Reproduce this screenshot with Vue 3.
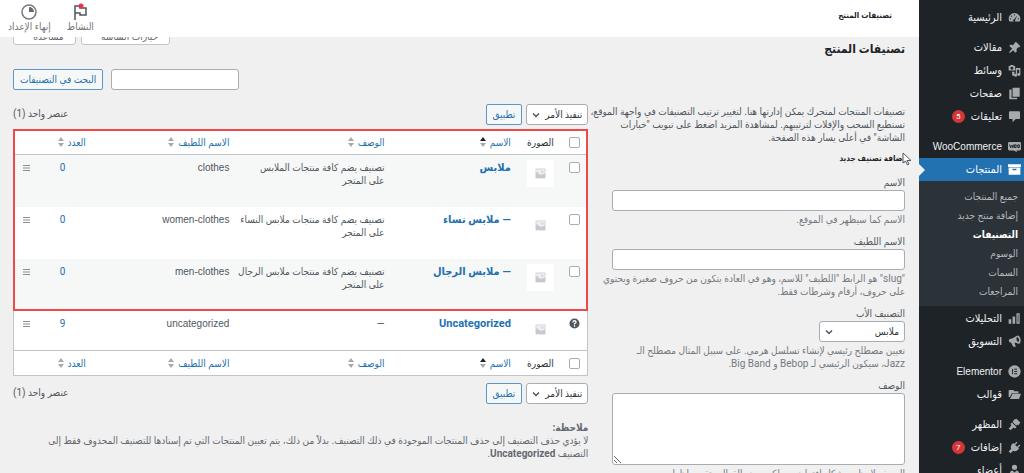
<script setup>
const menuTop = [
  { label: 'الرئيسية', icon: 'dash' },
  { label: 'مقالات', icon: 'pin', gap: true },
  { label: 'وسائط', icon: 'media' },
  { label: 'صفحات', icon: 'pages' },
  { label: 'تعليقات', icon: 'comment', badge: 5 },
  { label: 'WooCommerce', icon: 'woo', gap: true, latin: true },
]
const submenu = ['جميع المنتجات', 'إضافة منتج جديد', 'التصنيفات', 'الوسوم', 'السمات', 'المراجعات']
const menuBottom = [
  { label: 'التحليلات', icon: 'bars' },
  { label: 'التسويق', icon: 'horn' },
  { label: 'Elementor', icon: 'elementor', gap: true, latin: true },
  { label: 'قوالب', icon: 'folder' },
  { label: 'المظهر', icon: 'brush', gap: true },
  { label: 'إضافات', icon: 'plug', badge: 7 },
  { label: 'أعضاء', icon: 'user' },
]
const icons = {
  dash: 'M10 3a9 9 0 0 0-8 13h16A9 9 0 0 0 10 3zm0 2a1 1 0 1 1 0 2 1 1 0 0 1 0-2zM5.500 7a1 1 0 1 1 0 2 1 1 0 0 1 0-2zm9 0-3.500 7a1.600 1.600 0 1 1-2-1zM4 11a1 1 0 1 1 0 2 1 1 0 0 1 0-2zm12 0a1 1 0 1 1 0 2 1 1 0 0 1 0-2z',
  pin: 'M10 3.500 12 1l7 7-2 2-1.400-.4-2.600 3 .5 3.600-2 2-3.800-3.800-5 4.500L2 17l4.300-5.300L2 7.500l2-2 3.500 1z',
  media: 'M1 3h2l1-1.500h4L9 3h2v7H1zm5 1.200a2.200 2.200 0 1 0 0 4.500 2.200 2.200 0 0 0 0-4.500zM12 6h7v10a2.300 2.300 0 1 1-1.800-2.200V9H14v8.500a2.300 2.300 0 1 1-2-2.300zM6 12h4v4a2 2 0 1 1-1.500-2H6z',
  pages: 'M7 1h11v14H7zM2 4h3.500v12.500H14V19H2z',
  comment: 'M3 2h14q1.500 0 1.500 1.500v9Q18.500 14 17 14h-5l-5 5v-5H3q-1.500 0-1.500-1.500v-9Q1.500 2 3 2z',
  box: 'M0 2h20v4H0zm1 5h18v11H1zm6 2v2h6V9z',
  bars: 'M1 11h4v7H1zm6-4h4v11H7zm6-5h5v16h-5zm2 2v12h1V4z',
  horn: 'M17 2c3 3 3 8 1 11-2 1-4-1-8-1l2 6H8l-3-6C1 12 0 7 3 6c5 0 8-4 11-5q2-.5 3 1zm-3 1c-2 2-1 6 2 8 2-3 1-7-2-8z',
  folder: 'M2 3h6l2 2h6v3H6l-3 6H1V4zm5 6h13l-3 8H3z',
  brush: 'M13 1 19 7l-3 4-2-1-1 2-6-6 2-2-1-1zM6 7l7 7-2 2-3-1-4 4-3-3 4-4-1-3z',
  plug: 'M13 1l1.500 1.500L11 6l3 3 3.500-3.500L19 7l-3.500 3.500L17 12l-2 2q-4 3-7 1l-4 4-3-3 4-4q-2-3 1-7l2-2 1.500 1.500z',
  user: 'M10 1a4 4 0 1 1 0 8 4 4 0 0 1 0-8zM3 19v-5q0-4 4-4l3 3 3-3q4 0 4 4v5z',
}
const columns = [
  { key: 'name', label: 'الاسم', active: true },
  { key: 'desc', label: 'الوصف' },
  { key: 'slug', label: 'الاسم اللطيف' },
  { key: 'count', label: 'العدد' },
]
const rows = [
  { name: 'ملابس', desc: 'تصنيف يضم كافة منتجات الملابس على\u00a0المتجر', slug: 'clothes', count: 0 },
  { name: '— ملابس نساء', desc: 'تصنيف يضم كافة منتجات ملابس النساء على\u00a0المتجر', slug: 'women-clothes', count: 0 },
  { name: '— ملابس الرجال', desc: 'تصنيف يضم كافة منتجات ملابس الرجال على\u00a0المتجر', slug: 'men-clothes', count: 0 },
  { name: 'Uncategorized', desc: '—', slug: 'uncategorized', count: 9, fixed: true },
]
</script>

<template>
  <div class="app" dir="rtl" lang="ar">
    <nav class="side" aria-label="القائمة الرئيسية">
      <template v-for="(group, g) in [menuTop, menuBottom]" :key="g">
        <a v-for="m in group" :key="m.label" href="#" class="item" :class="{ gap: m.gap }">
          <svg v-if="m.icon === 'woo'" class="ico" viewBox="0 0 20 20" aria-hidden="true">
            <path d="M2 3h16q2 0 2 2v9q0 2-2 2h-5l1 3-5-3H2q-2 0-2-2V5q0-2 2-2z" />
            <path class="cut" d="m2.500 7 1.500 5 2-4 1.500 4 1-5M10 7.500h2.500v4H10zM15 7.500h2.500v4H15z" />
          </svg>
          <svg v-else-if="m.icon === 'elementor'" class="ico" viewBox="0 0 20 20" aria-hidden="true">
            <circle cx="10" cy="10" r="9.500" />
            <path class="cut" d="M7 6v8M9.500 6.500H14M9.500 10H14M9.500 13.500H14" />
          </svg>
          <svg v-else class="ico" viewBox="0 0 20 20" aria-hidden="true">
            <path fill-rule="evenodd" :d="icons[m.icon]" />
          </svg>
          <span :class="{ latin: m.latin }">{{ m.label }}</span>
          <span v-if="m.badge" class="badge">{{ m.badge }}</span>
        </a>
        <template v-if="g === 0">
          <a href="#" class="item current">
            <svg class="ico" viewBox="0 0 20 20" aria-hidden="true"><path fill-rule="evenodd" :d="icons.box" /></svg>
            <span>المنتجات</span>
          </a>
          <div class="sub">
            <a v-for="s in submenu" :key="s" href="#" :class="{ on: s === 'التصنيفات' }">{{ s }}</a>
          </div>
        </template>
      </template>
    </nav>

    <div class="main">
      <header class="bar">
        <strong class="crumb">تصنيفات المنتج</strong>
        <div class="acts">
          <button type="button" class="act">
            <svg viewBox="0 0 18 18" aria-hidden="true">
              <path d="M4 17V3h5v2h6v7H9v-2H4" fill="none" stroke="#50575e" stroke-width="1.500" />
              <circle cx="10" cy="3" r="2.500" fill="#e8343f" />
            </svg>
            <span>النشاط</span>
          </button>
          <button type="button" class="act">
            <svg viewBox="0 0 18 18" aria-hidden="true">
              <circle cx="9" cy="9" r="7" fill="none" stroke="#757a80" stroke-width="1.500" />
              <path d="M9 4v5h5a5 5 0 0 0-5-5z" fill="#646970" />
            </svg>
            <span>إنهاء الإعداد</span>
          </button>
        </div>
      </header>

      <main class="content">
        <div class="top">
          <h1>تصنيفات المنتج</h1>
          <div class="meta">
            <button type="button" class="tab wide">خيارات الشاشة</button>
            <button type="button" class="tab">مساعدة</button>
          </div>
        </div>

        <form class="search" @submit.prevent>
          <input type="search" aria-label="البحث في التصنيفات" />
          <button type="submit" class="btn">البحث في التصنيفات</button>
        </form>

        <div class="cols">
          <form class="add" @submit.prevent>
            <p class="intro">تصنيفات المنتجات لمتجرك يمكن إدارتها هنا. لتغيير ترتيب التصنيفات في واجهة الموقع، تستطيع السحب والإفلات لترتيبهم. لمشاهدة المزيد اضغط على تبويب "خيارات الشاشة" في أعلى يسار هذه الصفحة.</p>
            <h2>
              إضافة تصنيف جديد
              <svg class="cursor" viewBox="0 0 10 14" aria-hidden="true">
                <path d="M1 1v10l2.500-2 2 4 1.500-1-2-3.500H9z" fill="#fff" stroke="#50575e" />
              </svg>
            </h2>
            <div class="field">
              <label for="name">الاسم</label>
              <input id="name" type="text" />
              <p>الاسم كما سيظهر في الموقع.</p>
            </div>
            <div class="field">
              <label for="slug">الاسم اللطيف</label>
              <input id="slug" type="text" />
              <p class="long">"slug" هو الرابط "اللطيف" للاسم، وهو في العادة يتكون من حروف صغيرة ويحتوي على حروف، أرقام وشرطات فقط.</p>
            </div>
            <div class="field">
              <label for="parent">التصنيف الأب</label>
              <select id="parent" class="parent"><option>ملابس</option></select>
              <p class="hint">تعيين مصطلح رئيسي لإنشاء تسلسل هرمي. على سبيل المثال مصطلح الـ Jazz، سيكون الرئيسي لـ Bebop و Big Band.</p>
            </div>
            <div class="field">
              <label for="desc">الوصف</label>
              <textarea id="desc"></textarea>
              <p>الوصف لا يظهر بشكل إفتراضي، ولكن بعض القوالب تقوم بإظهاره.</p>
            </div>
          </form>

          <section class="list">
            <div class="nav">
              <select aria-label="تنفيذ الأمر"><option>تنفيذ الأمر</option></select>
              <button type="button" class="btn">تطبيق</button>
              <span class="total">عنصر واحد (1)</span>
            </div>
            <div class="frame">
              <table>
                <colgroup>
                  <col class="c-check" /><col class="c-img" /><col class="c-name" /><col class="c-desc" /><col class="c-slug" /><col class="c-count" /><col class="c-grip" />
                </colgroup>
                <component :is="part" v-for="part in ['thead', 'tfoot']" :key="part">
                  <tr>
                    <td class="check"><input type="checkbox" aria-label="تحديد الكل" /></td>
                    <th class="img">الصورة</th>
                    <th v-for="c in columns" :key="c.key" :class="c.key">
                      <a href="#" class="sort">{{ c.label }}
                        <svg viewBox="0 0 6 10" aria-hidden="true">
                          <path d="M3 0 6 4H0z" :class="{ dark: c.active }" /><path d="M0 6h6L3 10z" />
                        </svg>
                      </a>
                    </th>
                    <td></td>
                  </tr>
                </component>
                <tbody>
                  <tr v-for="r in rows" :key="r.slug" :class="{ short: r.fixed }">
                    <td class="check">
                      <svg v-if="r.fixed" class="help" viewBox="0 0 12 12" role="img" aria-label="مساعدة">
                        <circle cx="6" cy="6" r="5.500" fill="#50575e" />
                        <path d="M4.300 4.800Q4.300 3 6 3t1.700 1.500Q7.700 5.300 6 6.200V7M6 8v1.500" fill="none" stroke="#fff" stroke-width="1.400" />
                      </svg>
                      <input v-else type="checkbox" :aria-label="r.name" />
                    </td>
                    <td class="img">
                      <span class="thumb">
                        <svg viewBox="0 0 12 12" aria-hidden="true">
                          <path d="M1 1h10v10H1z" fill="#eceef0" stroke="#d5d8dc" />
                          <path d="M1 5q2-1 3 1t4 1l3-1v5H1z" fill="#c6cacf" /><circle cx="8" cy="4" r="1" fill="#c6cacf" />
                        </svg>
                      </span>
                    </td>
                    <td class="name"><a href="#">{{ r.name }}</a></td>
                    <td class="desc">{{ r.desc }}</td>
                    <td class="slug latin">{{ r.slug }}</td>
                    <td class="count"><a href="#">{{ r.count }}</a></td>
                    <td class="grip">
                      <svg viewBox="0 0 7 6" aria-hidden="true"><path d="M0 .5h7M0 3h7M0 5.500h7" stroke="#8c8f94" /></svg>
                    </td>
                  </tr>
                </tbody>
              </table>
              <div class="mark"></div>
            </div>
            <div class="nav below">
              <select aria-label="تنفيذ الأمر"><option>تنفيذ الأمر</option></select>
              <button type="button" class="btn">تطبيق</button>
              <span class="total">عنصر واحد (1)</span>
            </div>
            <div class="note">
              <strong>ملاحظة:</strong>
              <p>لا يؤدي حذف التصنيف إلى حذف المنتجات الموجودة في ذلك التصنيف. بدلاً من ذلك، يتم تعيين المنتجات التي تم إسنادها للتصنيف المحذوف فقط إلى التصنيف <strong>Uncategorized</strong>.</p>
            </div>
          </section>
        </div>
      </main>
    </div>
  </div>
</template>

<style>
body { margin: 0; background: #f0f0f1; }
</style>

<style scoped>
* { box-sizing: border-box; }
.app {
  display: flex;
  height: 100vh;
  overflow: hidden;
  background: #f0f0f1;
  color: #50575e;
  font: 10px/13px Roboto, "DejaVu Sans Condensed", "DejaVu Sans", sans-serif;
}
a { color: #2271b1; text-decoration: none; }
h1, h2, p { margin: 0; }
input, select, textarea, button { font: inherit; color: inherit; }
.latin { font-family: "Liberation Sans", Arial, sans-serif; font-size: 10px; }

.side { flex: 0 0 105px; background: #1d2327; padding-top: 6px; }
.item {
  display: flex;
  align-items: center;
  gap: 6px;
  height: 23px;
  padding-right: 3px;
  color: #f0f0f1;
  font-size: 11px;
}
.item.gap { margin-top: 7px; }
.ico { flex: none; width: 13px; height: 13px; fill: #a7aaad; }
.cut { fill: none; stroke: #1d2327; stroke-width: 1.500; }
.badge {
  width: 13px;
  height: 13px;
  border-radius: 50%;
  background: #d63638;
  color: #fff;
  font-size: 8px;
  line-height: 13px;
  text-align: center;
}
.current { position: relative; background: #2271b1; color: #fff; }
.current .ico { fill: #fff; }
.current::after {
  content: "";
  position: absolute;
  left: 0;
  top: 6px;
  border: 6px solid transparent;
  border-left-color: #f0f0f1;
  border-right-width: 0;
}
.sub { display: flex; flex-direction: column; padding: 6px 6px 5px; margin-bottom: 1px; background: #2c3338; }
.sub a { color: #b4b9be; line-height: 19px; white-space: nowrap; }
.sub .on { color: #fff; font-weight: bold; }

.main { flex: 1; min-width: 0; }
.bar {
  position: relative;
  z-index: 2;
  display: flex;
  justify-content: space-between;
  height: 37px;
  padding: 0 27px 0 8px;
  background: #fff;
}
.crumb { color: #1d2327; line-height: 32px; font-size: 8px; }
.acts { display: flex; gap: 16px; }
.act {
  display: flex;
  flex-direction: column;
  align-items: center;
  padding: 3px 0 0;
  border: 0;
  background: none;
  color: #757575;
  line-height: 12px;
}
.act svg { width: 18px; height: 18px; }

.content { padding: 0 14px 0 13px; }
.top { display: flex; justify-content: space-between; align-items: flex-start; height: 32px; }
h1 { color: #1d2327; font-size: 12px; line-height: 24px; }
.meta { display: flex; gap: 5px; margin-top: -16px; }
.tab {
  width: 63px;
  height: 24px;
  padding: 6px 0 0 8px;
  border: 1px solid #c3c4c7;
  border-radius: 0 0 3px 3px;
  background: #fff;
  color: #646970;
}
.tab.wide { width: 89px; }
.search { display: flex; justify-content: flex-end; gap: 8px; }
.search input { width: 128px; }
input, select, textarea {
  height: 21px;
  margin: 0;
  padding: 0 5px;
  border: 1px solid #a9acb1;
  border-radius: 3px;
  background: #fff;
}
.btn {
  height: 21px;
  padding: 0 6px;
  border: 1px solid #5b96c8;
  border-radius: 2px;
  background: #f6f7f7;
  color: #2271b1;
}
select {
  appearance: none;
  width: 62px;
  color: #2c3338;
  background: #fff url("data:image/svg+xml,%3Csvg xmlns='http://www.w3.org/2000/svg' viewBox='0 0 8 8'%3E%3Cpath d='M1 2.500l3 3 3-3' fill='none' stroke='%2350575e' stroke-width='1.500'/%3E%3C/svg%3E") no-repeat left 5px center / 8px 8px;
}
.cols { display: flex; gap: 24px; margin-top: 14px; }
.add { flex: 1 1 0; min-width: 0; }
.list { flex: 0 0 64.5%; min-width: 0; }

.intro { margin-left: -22px; padding-top: 1px; }
h2 { position: relative; margin: 8px 0 10px; color: #1d2327; font-size: 8px; line-height: 14px; }
.cursor { position: absolute; right: -7px; top: 0; width: 10px; height: 14px; }
.field { display: flex; flex-direction: column; align-items: flex-start; margin-bottom: 9px; }
.field label { line-height: 14px; }
.field p { color: #757a80; margin-top: 2px; }
.field .long { margin-left: -12px; }
.field .hint { margin-left: 8px; }
.field input { width: 100%; }
.field .parent { width: 86px; }
textarea { width: 100%; height: 72px; resize: both; }

.nav { display: flex; align-items: center; gap: 4px; }
.total { margin-right: auto; align-self: flex-start; line-height: 20px; }
.frame { position: relative; margin-top: 4px; }
.mark { position: absolute; inset: 0 0 auto; height: 182px; border: 2px solid #ef4a4a; pointer-events: none; }
table {
  width: 100%;
  table-layout: fixed;
  border-collapse: collapse;
  border: 1px solid #c3c4c7;
  background: #fff;
}
.c-check { width: 26px; }
.c-img { width: 51px; }
.c-name { width: 22%; }
.c-desc { width: 27%; }
.c-slug { width: 25%; }
.c-grip { width: 26px; }
th, td { padding: 0; text-align: right; vertical-align: top; font-weight: normal; }
thead td, thead th, tfoot td, tfoot th { height: 25px; vertical-align: middle; color: #2c3338; }
thead tr { border-bottom: 1px solid #c3c4c7; }
tfoot tr { border-top: 1px solid #c3c4c7; }
tbody tr { height: 52px; }
tbody tr.short { height: 40px; }
tbody tr:nth-child(odd) { background: #f6f7f7; }
tbody td { padding-top: 6px; }
td.check { padding-right: 7px; }
tbody .check { padding-top: 7px; }
.check input { appearance: none; display: block; width: 11px; height: 11px; padding: 0; border-radius: 2px; }
.help { display: block; width: 11px; height: 11px; }
.img { padding-right: 8px; }
.thumb { display: flex; align-items: center; justify-content: center; width: 27px; height: 27px; background: #fff; }
.thumb svg { width: 11px; height: 11px; }
tbody .img { padding-top: 5px; }
tbody .name { font-size: 11px; font-weight: bold; }
.sort { display: flex; align-items: center; gap: 4px; }
.sort svg { width: 6px; height: 10px; fill: #a7aaad; }
.sort .dark { fill: #1d2327; }
tbody .count, tbody .grip { text-align: center; }
.grip svg { width: 7px; height: 6px; }
.below { margin-top: 7px; }
.note { margin-top: 17px; padding-left: 28px; color: #646970; }
</style>
